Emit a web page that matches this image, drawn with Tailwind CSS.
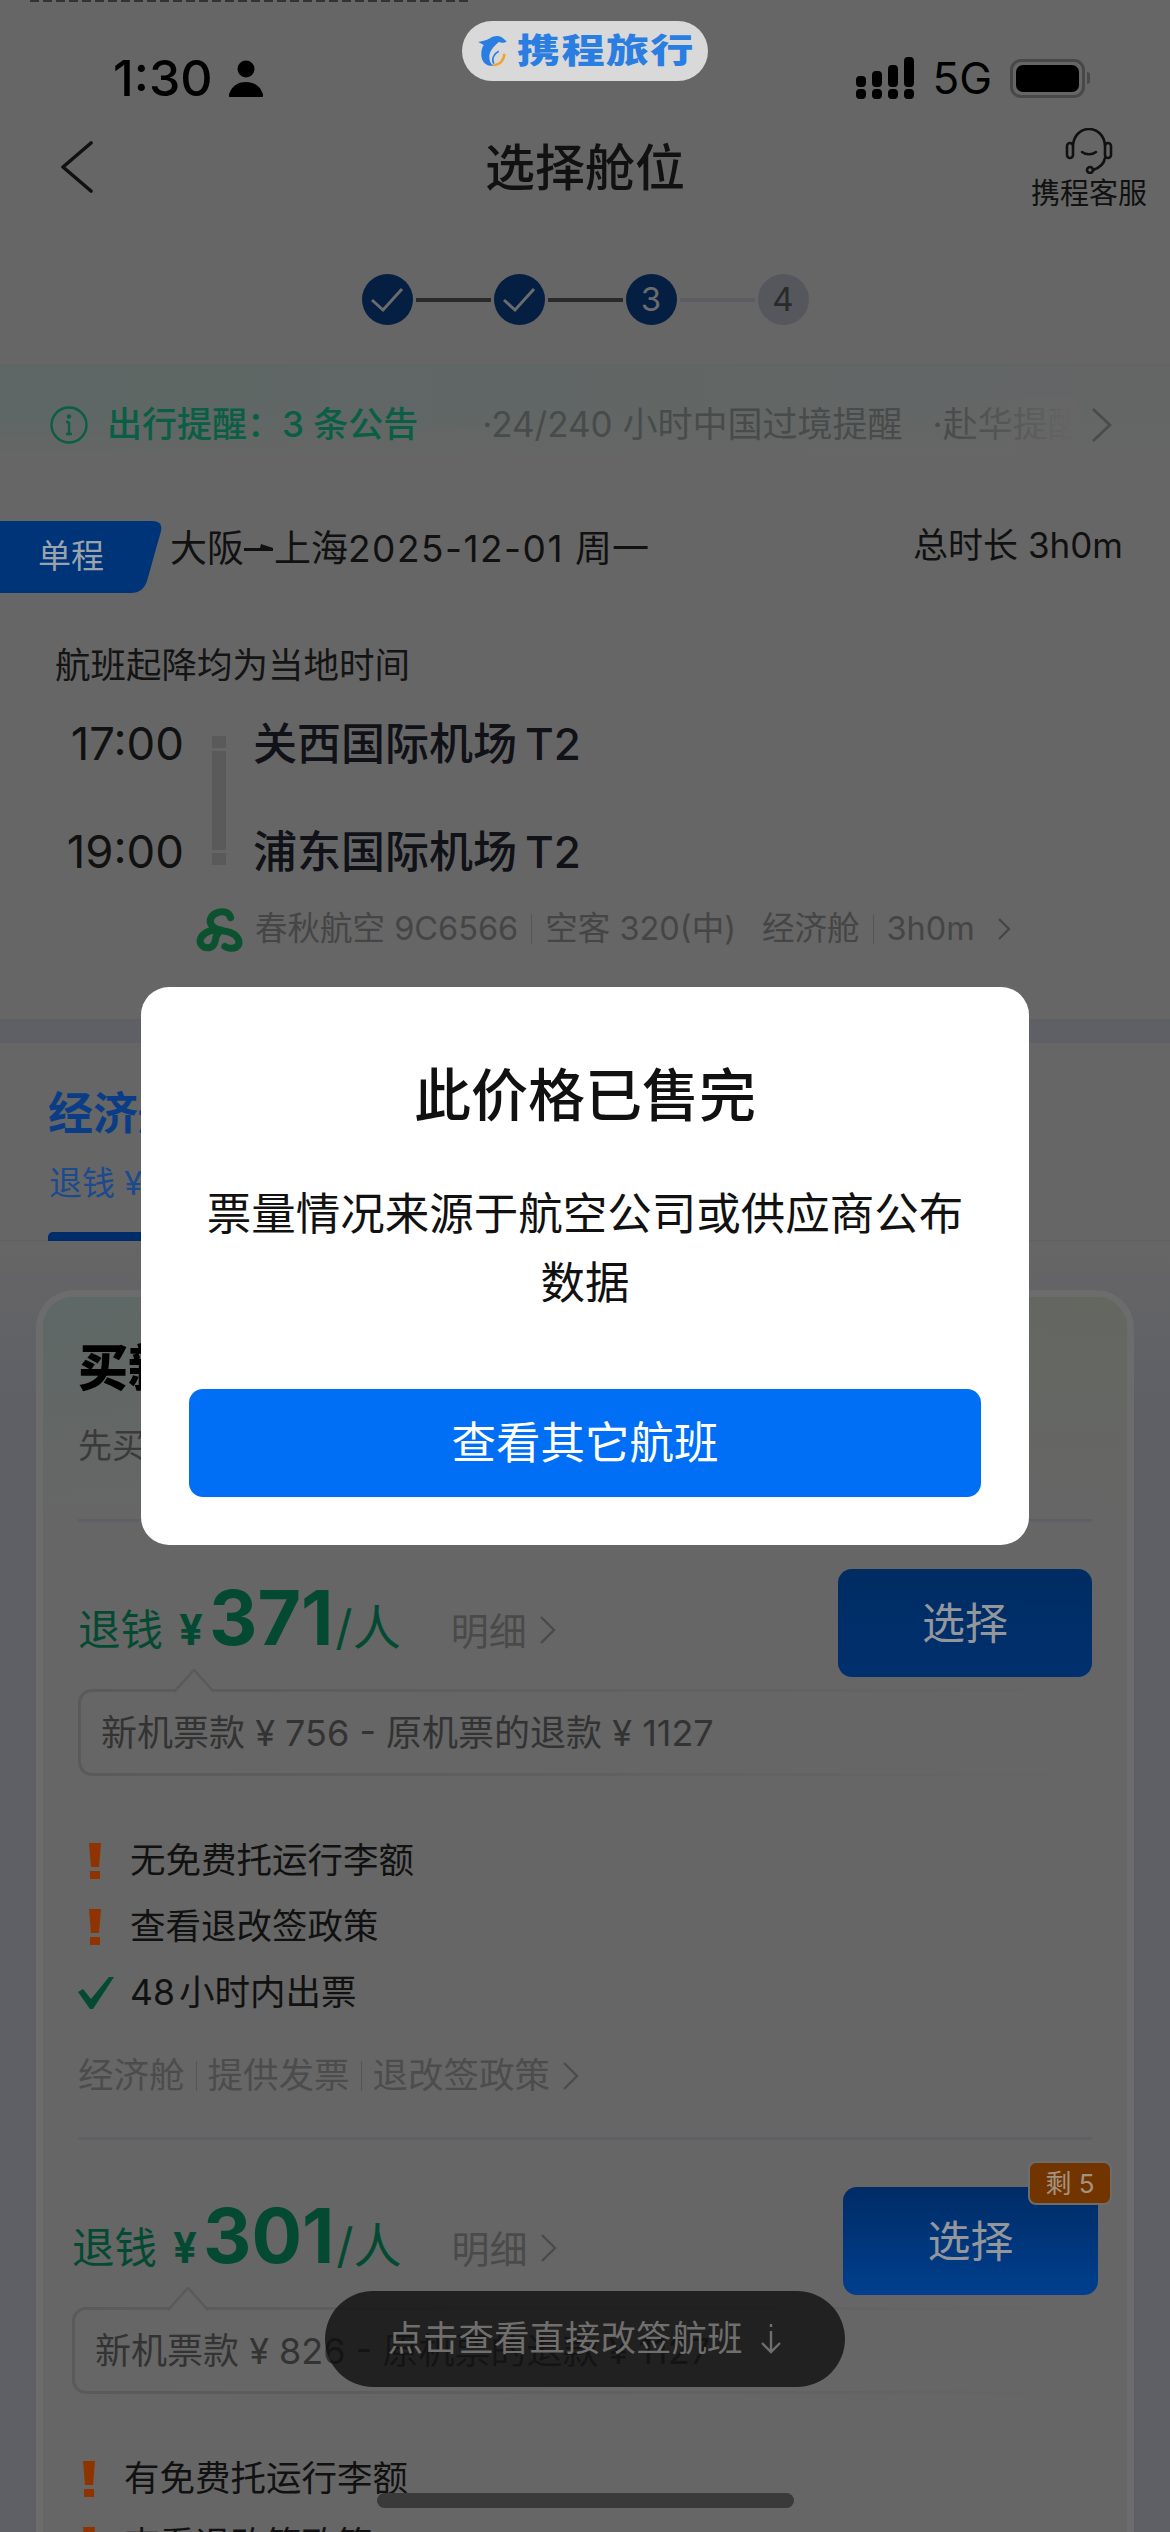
<!DOCTYPE html>
<html lang="zh-CN">
<head>
    <meta charset="UTF-8">
    <meta name="viewport" content="width=device-width, initial-scale=1.0">
    <title>选择舱位</title>
    <script src="https://cdn.jsdelivr.net/npm/@tailwindcss/browser@4"></script>
</head>
<body class="bg-[#666666]">
    <div class="relative w-[1170px] h-[2532px] overflow-hidden bg-[#666666] text-[#111111] font-[Inter,'Noto_Sans_CJK_SC',sans-serif]">

        <!-- top sliver of the notification text -->
        <div class="absolute left-[30px] top-0 w-[440px] h-[2px] bg-[repeating-linear-gradient(to_right,#333333_0,#333333_9px,transparent_9px,transparent_13px)]"></div>

        <!-- header -->
        <header class="h-[364px]">
            <div class="flex h-[128px] justify-between pt-[50px] pl-[113px] pr-[80px]">
                <div class="flex items-center h-[56px] gap-[16px]">
                    <span class="text-[50px] leading-[56px] font-medium text-black">1:30</span>
                    <svg class="w-[34px] h-[37px]" viewBox="0 0 34 37" fill="#000"><circle cx="17" cy="9" r="8.5"/><path d="M1 37c-2 0-1-3 0-5 3-7 9-10 16-10s13 3 16 10c1 2 2 5 0 5z"/></svg>
                </div>
                <div class="flex items-center h-[56px]">
                    <svg class="w-[58px] h-[42px]" viewBox="0 0 58 42" fill="#000">
                        <rect x="0" y="19" width="10" height="11" rx="4"/><rect x="16" y="14" width="10" height="16" rx="4"/><rect x="32" y="8" width="10" height="22" rx="4"/><rect x="48" y="0" width="10" height="30" rx="4"/>
                        <rect x="0" y="32" width="10" height="10" rx="4"/><rect x="16" y="32" width="10" height="10" rx="4"/><rect x="32" y="32" width="10" height="10" rx="4"/><rect x="48" y="32" width="10" height="10" rx="4"/>
                    </svg>
                    <span class="ml-[18px] text-[44px] leading-[56px] text-black">5G</span>
                    <div class="ml-[18px] w-[75px] h-[39px] rounded-[11px] border-[3px] border-[#484848] p-[3px]">
                        <div class="w-full h-full rounded-[7px] bg-black"></div>
                    </div>
                    <div class="ml-[2px] w-[3px] h-[12px] rounded-r-[3px] bg-[#484848]"></div>
                </div>
            </div>
            <div class="grid grid-cols-[1fr_auto_1fr] h-[146px]">
                <div class="pl-[60px] pt-[13px]">
                    <svg class="w-[34px] h-[52px]" viewBox="0 0 34 52" fill="none" stroke="#111" stroke-width="3.6" stroke-linecap="round" stroke-linejoin="round"><path d="M31 2 3 26l28 24"/></svg>
                </div>
                <h1 class="mt-[14px] text-[50px] leading-[52px] font-medium text-[#111111]">选择舱位</h1>
                <div class="flex flex-col items-end pr-[23px]">
                    <div class="flex flex-col items-center">
                        <svg class="w-[48px] h-[46px]" viewBox="0 0 48 46" fill="none" stroke="#111" stroke-width="2.6" stroke-linecap="round">
                            <path d="M8 17C9 7 16 1 24 1s15 6 16 16"/>
                            <rect x="2" y="15" width="6" height="15" rx="3"/>
                            <rect x="40" y="15" width="6" height="15" rx="3"/>
                            <path d="M17 24c4 3 10 3 14 0"/>
                            <path d="M40 30c-1 6-6 10-12 12"/>
                            <circle cx="25" cy="42" r="3"/>
                        </svg>
                        <span class="mt-[3px] text-[29px] leading-[34px] text-[#111111]">携程客服</span>
                    </div>
                </div>
            </div>
            <div class="flex justify-center items-center h-[51px] gap-[3px]">
                <div class="flex items-center justify-center w-[51px] h-[51px] rounded-full bg-[#041f42]">
                    <svg class="w-[34px] h-[26px]" viewBox="0 0 34 26" fill="none" stroke="#6b6b6b" stroke-width="3"><path d="M2 13l11 10L32 2"/></svg>
                </div>
                <div class="w-[75px] h-[4px] bg-[#2a2a2a]"></div>
                <div class="flex items-center justify-center w-[51px] h-[51px] rounded-full bg-[#041f42]">
                    <svg class="w-[34px] h-[26px]" viewBox="0 0 34 26" fill="none" stroke="#6b6b6b" stroke-width="3"><path d="M2 13l11 10L32 2"/></svg>
                </div>
                <div class="w-[75px] h-[4px] bg-[#2a2a2a]"></div>
                <div class="flex items-center justify-center w-[51px] h-[51px] rounded-full bg-[#041f42] text-[33px] text-[#6b6b6b]">3</div>
                <div class="w-[75px] h-[4px] bg-[#5a5c61]"></div>
                <div class="flex items-center justify-center w-[51px] h-[51px] rounded-full bg-[#55575d] text-[33px] text-[#2a2a2a]">4</div>
            </div>
        </header>

        <!-- notice band -->
        <div class="flex items-center h-[94px] pt-[26px] pl-[50px] border-t border-[#636363] bg-[linear-gradient(to_bottom,transparent_55%,#666666),linear-gradient(to_right,#5e6765,#646666)]">
            <svg class="w-[38px] h-[38px] shrink-0" viewBox="0 0 38 38" fill="none" stroke="#0a5e44" stroke-width="2.4"><circle cx="19" cy="19" r="17.5"/><path d="M19 16v12M16 16h3M16 28h6"/><circle cx="19" cy="10.5" r="1" fill="#0a5e44"/></svg>
            <span class="ml-[19px] text-[35px] font-medium text-[#0a5e44] whitespace-nowrap">出行提醒：3 条公告</span>
            <div class="relative ml-[64px] w-[595px] overflow-hidden whitespace-nowrap text-[35px] text-[#474b4a]">
                <span>·24/240 小时中国过境提醒</span><span class="ml-[30px]">·赴华提醒须知</span>
                <div class="absolute right-0 inset-y-0 w-[130px] bg-linear-to-r from-transparent to-[#666666]"></div>
            </div>
            <svg class="ml-[14px] w-[22px] h-[36px]" viewBox="0 0 22 36" fill="none" stroke="#4a4a4a" stroke-width="2.6"><path d="M2 2l17 16L2 34"/></svg>
        </div>

        <!-- flight -->
        <section class="h-[561px] pt-[63px]">
            <div class="flex items-start">
                <div class="flex items-center justify-center w-[162px] h-[72px] pr-[20px] bg-[#003478] text-[33px] text-[#9aa3ad] [clip-path:path('M0_0H152Q163_0_161_10L147_60Q143_72_131_72H0Z')]">单程</div>
                <div class="flex items-center ml-[8px] mt-[3px] text-[37px] leading-[50px] text-[#111111]">
                    <span>大阪</span>
                    <svg class="w-[30px] h-[14px]" viewBox="0 0 30 14" fill="#111"><path d="M0 6h16l1-4 12 4v3H0z"/></svg>
                    <span>上海</span>
                    <span class="tracking-[1.5px]">2025-12-01</span>
                    <span class="ml-[11px]">周一</span>
                </div>
                <div class="ml-auto pr-[47px] text-[35px] leading-[48px] text-[#111111]">总时长 3h0m</div>
            </div>
            <div class="mt-[52px] pl-[55px] text-[35.5px] leading-[42px] text-[#141414]">航班起降均为当地时间</div>
            <div class="flex mt-[35px]">
                <div class="flex flex-col gap-[64px] w-[184px] text-right text-[45.5px] leading-[44px] text-[#111111]">
                    <span>17:00</span>
                    <span>19:00</span>
                </div>
                <div class="flex flex-col gap-[3px] ml-[28px] mt-[14px] w-[14px] h-[129px]">
                    <div class="h-[12px] bg-[#5a5a5a]"></div>
                    <div class="flex-1 bg-[#5a5a5a]"></div>
                    <div class="h-[12px] bg-[#5a5a5a]"></div>
                </div>
                <div class="flex flex-col gap-[64px] ml-[27px] text-[44px] leading-[44px] font-medium text-[#111118]">
                    <span>关西国际机场<span class="ml-[8px]">T2</span></span>
                    <span>浦东国际机场<span class="ml-[8px]">T2</span></span>
                </div>
            </div>
            <div class="flex items-center h-[48px] mt-[31px] pl-[196px] text-[32.5px] text-[#454545]">
                <svg class="w-[47px] h-[47px]" viewBox="30 35 140 125" fill="none" stroke="#0c5230" stroke-width="21" stroke-linecap="round"><path d="M133 62C128 46 112 42 98 46 78 50 66 68 76 84c6 9 18 14 28 16"/><path d="M104 100C84 96 58 102 46 120c-10 16 2 32 18 32 14 0 22-10 24-24 1-10 8-22 16-28"/><path d="M104 100c14 2 30 4 42 14 14 12 16 28 4 36-10 6-26 4-34-2"/></svg>
                <span class="ml-[12px]">春秋航空 9C6566</span>
                <span class="mx-[13px] w-px h-[30px] bg-[#555555]"></span>
                <span>空客 320(中)</span>
                <span class="ml-[26px]">经济舱</span>
                <span class="mx-[13px] w-px h-[30px] bg-[#555555]"></span>
                <span>3h0m</span>
                <svg class="ml-[22px] w-[14px] h-[24px]" viewBox="0 0 14 24" fill="none" stroke="#454545" stroke-width="2.2"><path d="M2 2l10 10L2 22"/></svg>
            </div>
        </section>

        <div class="h-[24px] bg-[#5f6066]"></div>

        <!-- tabs -->
        <section class="h-[198px] pt-[45px] border-b border-[#606166]">
            <div class="pl-[48px] text-[45px] leading-[52px] font-bold text-[#0a3d85]">经济舱</div>
            <div class="mt-[22px] pl-[49px] text-[33px] leading-[42px] text-[#1c4a8d]">退钱 ¥301 起</div>
            <div class="mt-[28px] ml-[48px] w-[130px] h-[9px] rounded-t-[5px] bg-[#002c6a]"></div>
        </section>

        <!-- fares -->
        <section class="pt-[49px] px-[36px] h-[1291px] bg-linear-to-b from-[#666666] to-[#5f6066] to-12%">
            <div class="rounded-t-[38px] border-[7px] border-b-0 border-[#6c6c6c] bg-[#666666]">
                <div class="h-[222px] px-[35px] pt-[46px] rounded-t-[30px] bg-[linear-gradient(to_bottom,transparent,#666666),linear-gradient(to_right,#5e6866,#646760)]">
                    <div class="text-[50px] leading-[50px] font-black text-black">买新退旧</div>
                    <div class="mt-[32px] text-[34px] leading-[42px] text-[#3a3a3a]">先买新票再退旧票</div>
                </div>
                <div class="px-[35px]">
                    <div class="h-[3px] bg-[#5f6066]"></div>

                    <!-- fare 1 -->
                    <div class="flex justify-between mt-[47px]">
                        <div class="flex items-baseline mt-[11px] text-[#044a32] h-[90px]">
                            <span class="text-[42.5px] leading-[75px]">退钱</span>
                            <span class="ml-[16px] mr-[6px] text-[42px] leading-[75px] font-bold">¥</span>
                            <span class="text-[75px] leading-[75px] font-bold">371</span>
                            <span class="ml-[2px] text-[48px] leading-[75px]">/人</span>
                            <span class="ml-[50px] text-[38px] leading-[75px] text-[#4a4a4a]">明细</span>
                            <svg class="ml-[12px] w-[18px] h-[30px]" viewBox="0 0 18 30" fill="none" stroke="#4a4a4a" stroke-width="2.4"><path d="M2 2l13 13L2 28"/></svg>
                        </div>
                        <button class="w-[254px] h-[108px] rounded-[14px] bg-linear-to-b from-[#002c62] to-[#00306e] text-[43px] text-[#93979c]">选择</button>
                    </div>
                    <div class="relative mt-[12px] h-[87px] p-[3px] rounded-[14px] bg-linear-to-r from-[#5a5a5a] to-[#666666]">
                        <svg class="absolute left-[96px] -top-[20px] w-[40px] h-[24px]" viewBox="0 0 40 24" fill="#666666" stroke="#5a5a5a" stroke-width="2.5"><path d="M0 23 20 1l20 22"/></svg>
                        <div class="flex items-center h-full pl-[20px] rounded-[11px] bg-[#666666] text-[36px] text-[#333333]">新机票款 ¥ 756 - 原机票的退款 ¥ 1127</div>
                    </div>
                    <ul class="flex flex-col gap-[24px] mt-[64px] text-[35.5px] leading-[42px] text-[#111111]">
                        <li class="flex items-center">
                            <svg class="ml-[10px] mr-[28px] w-[14px] h-[36px]" viewBox="0 0 14 36" fill="#8f3300"><path d="M1 0h12l-2 24H3z"/><rect x="2" y="28" width="10" height="8"/></svg>
                            <span>无免费托运行李额</span>
                        </li>
                        <li class="flex items-center">
                            <svg class="ml-[10px] mr-[28px] w-[14px] h-[36px]" viewBox="0 0 14 36" fill="#8f3300"><path d="M1 0h12l-2 24H3z"/><rect x="2" y="28" width="10" height="8"/></svg>
                            <span>查看退改签政策</span>
                        </li>
                        <li class="flex items-center">
                            <svg class="mr-[16px] w-[36px] h-[32px]" viewBox="0 0 36 32" fill="#044a32"><path d="M0 15l5-3 8 10L31 0h5L15 32h-3z"/></svg>
                            <span><span class="mr-[4px]">48</span>小时内出票</span>
                        </li>
                    </ul>
                    <div class="flex items-center mt-[41px] h-[42px] text-[35.5px] text-[#4c4c4c]">
                        <span>经济舱</span>
                        <span class="mx-[11px] w-px h-[30px] bg-[#555555]"></span>
                        <span>提供发票</span>
                        <span class="mx-[11px] w-px h-[30px] bg-[#555555]"></span>
                        <span>退改签政策</span>
                        <svg class="ml-[12px] w-[18px] h-[30px]" viewBox="0 0 18 30" fill="none" stroke="#4c4c4c" stroke-width="2.4"><path d="M2 2l13 13L2 28"/></svg>
                    </div>
                    <div class="mt-[40px] h-[3px] bg-[#5f6066]"></div>

                    <!-- fare 2 -->
                    <div class="flex justify-between -ml-[6px] -mr-[6px] mt-[47px]">
                        <div class="flex items-baseline mt-[11px] text-[#044a32] h-[90px]">
                            <span class="text-[42.5px] leading-[75px]">退钱</span>
                            <span class="ml-[16px] mr-[6px] text-[42px] leading-[75px] font-bold">¥</span>
                            <span class="text-[75px] leading-[75px] font-bold">301</span>
                            <span class="ml-[2px] text-[48px] leading-[75px]">/人</span>
                            <span class="ml-[50px] text-[38px] leading-[75px] text-[#4a4a4a]">明细</span>
                            <svg class="ml-[12px] w-[18px] h-[30px]" viewBox="0 0 18 30" fill="none" stroke="#4a4a4a" stroke-width="2.4"><path d="M2 2l13 13L2 28"/></svg>
                        </div>
                        <div class="relative">
                            <button class="w-[255px] h-[108px] rounded-[14px] bg-linear-to-b from-[#002c66] to-[#003f8e] text-[43px] text-[#93979c]">选择</button>
                            <div class="absolute -right-[14px] -top-[26px] flex items-center justify-center w-[84px] h-[44px] rounded-[8px] border-[2px] border-[#6c6c6c] bg-[#733500] text-[26px] text-[#a39383]">剩 5</div>
                        </div>
                    </div>
                    <div class="relative -ml-[6px] mt-[12px] h-[87px] p-[3px] rounded-[14px] bg-linear-to-r from-[#5a5a5a] to-[#666666]">
                        <svg class="absolute left-[96px] -top-[20px] w-[40px] h-[24px]" viewBox="0 0 40 24" fill="#666666" stroke="#5a5a5a" stroke-width="2.5"><path d="M0 23 20 1l20 22"/></svg>
                        <div class="flex items-center h-full pl-[20px] rounded-[11px] bg-[#666666] text-[36px] text-[#333333]">新机票款 ¥ 826 - 原机票的退款 ¥ 1127</div>
                    </div>
                    <ul class="flex flex-col gap-[24px] -ml-[6px] mt-[64px] text-[35.5px] leading-[42px] text-[#111111]">
                        <li class="flex items-center">
                            <svg class="ml-[10px] mr-[28px] w-[14px] h-[36px]" viewBox="0 0 14 36" fill="#8f3300"><path d="M1 0h12l-2 24H3z"/><rect x="2" y="28" width="10" height="8"/></svg>
                            <span>有免费托运行李额</span>
                        </li>
                        <li class="flex items-center">
                            <svg class="ml-[10px] mr-[28px] w-[14px] h-[36px]" viewBox="0 0 14 36" fill="#8f3300"><path d="M1 0h12l-2 24H3z"/><rect x="2" y="28" width="10" height="8"/></svg>
                            <span>查看退改签政策</span>
                        </li>
                    </ul>
                </div>
            </div>
        </section>

        <!-- floating hint and home indicator -->
        <div class="absolute left-[325px] top-[2291px] flex items-center justify-center gap-[16px] w-[520px] h-[96px] rounded-full bg-[#0b0b0b]/75 text-[35.5px] text-[#706f6e]">
            <span>点击查看直接改签航班</span>
            <svg class="w-[24px] h-[32px]" viewBox="0 0 24 32" fill="none" stroke="#706f6e" stroke-width="2.4"><path d="M12 1v3M12 8v21M3 20l9 9 9-9"/></svg>
        </div>
        <div class="absolute left-[377px] top-[2493px] w-[417px] h-[15px] rounded-full bg-[#3a3a3a]"></div>

        <!-- brand pill -->
        <div class="absolute left-[462px] top-[21px] flex items-center w-[246px] h-[60px] pl-[15px] rounded-[30px] bg-[#d9d9d9]">
            <svg class="w-[31px] h-[36px]" viewBox="46 24 100 106">
                <path fill="#2a7de1" d="M50 48C65 45 78 42 88 36 100 26 118 26 128 34L142 46C134 52 124 50 116 48 100 62 84 78 86 100 87 112 92 120 100 124 80 128 62 115 60 92 59 78 62 66 68 58 62 54 56 52 50 48Z"/>
                <path fill="none" stroke="#f2a12e" stroke-width="8" d="M134 86C134 104 122 122 98 122"/>
                <path fill="none" stroke="#2a7de1" stroke-width="5" d="M116 78C100 86 92 104 100 118"/>
            </svg>
            <span class="ml-[9px] w-[177px] text-[34px] leading-[60px] font-black text-[#2a7de1] tracking-[1px] whitespace-nowrap origin-left scale-x-[1.27]">携程旅行</span>
        </div>

        <!-- dialog -->
        <div class="absolute left-[141px] top-[987px] w-[888px] h-[558px] rounded-[28px] bg-white px-[48px] pt-[71px] text-center">
            <h2 class="text-[57px] leading-[76px] font-medium text-[#111111]">此价格已售完</h2>
            <p class="mt-[46px] px-[10px] text-[44.5px] leading-[69px] text-[#111111]">票量情况来源于航空公司或供应商公布数据</p>
            <button class="block w-[792px] h-[108px] mt-[71px] rounded-[14px] bg-[#006ff5] text-[44.5px] text-white">查看其它航班</button>
        </div>
    </div>
</body>
</html>
